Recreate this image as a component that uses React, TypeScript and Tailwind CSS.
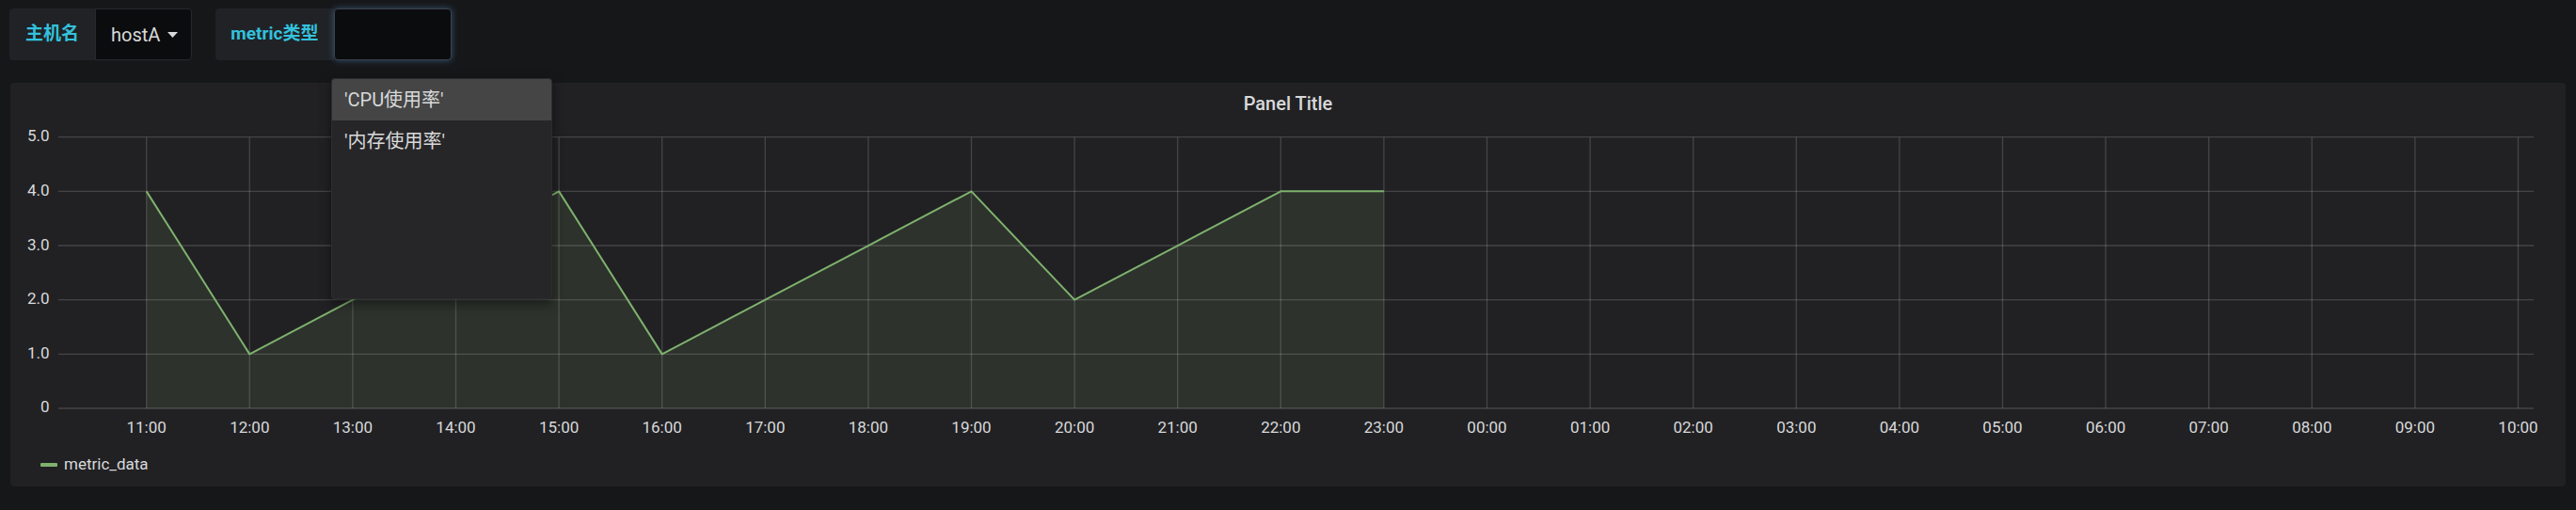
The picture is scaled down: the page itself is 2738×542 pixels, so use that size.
import React from "react";

const HOURS = [
  "11:00","12:00","13:00","14:00","15:00","16:00","17:00","18:00","19:00","20:00","21:00","22:00",
  "23:00","00:00","01:00","02:00","03:00","04:00","05:00","06:00","07:00","08:00","09:00","10:00",
];
const DATA = [4, 1, 2, 3, 4, 1, 2, 3, 4, 2, 3, 4, 4];

const X0 = 144.7;
const DX = 109.6;
const Y0 = 302;
const DY = 57.66;
const PLOT_L = 51;
const PLOT_R = 2682;

const xOf = (k: number) => X0 + k * DX;
const yOf = (v: number) => Y0 - v * DY;

function Chart() {
  const linePts = DATA.map((v, k) => `${xOf(k)},${yOf(v)}`).join(" ");
  const fillPts = `${xOf(0)},${Y0} ${linePts} ${xOf(DATA.length - 1)},${Y0}`;
  return (
    <svg width={2720} height={340} className="block" fontFamily="Roboto, sans-serif">
      <polygon points={fillPts} fill="#2d322c" />
      {[0, 1, 2, 3, 4, 5].map((v) => (
        <line key={v} x1={PLOT_L} x2={PLOT_R} y1={yOf(v)} y2={yOf(v)} stroke="rgba(255,255,255,0.16)" strokeWidth={1.3} />
      ))}
      {HOURS.map((_, k) => (
        <line key={k} x1={xOf(k)} x2={xOf(k)} y1={yOf(5)} y2={Y0} stroke="rgba(255,255,255,0.16)" strokeWidth={1.3} />
      ))}
      <polyline points={linePts} fill="none" stroke="#7eb26d" strokeWidth={2} strokeLinejoin="round" />
      {[0, 1, 2, 3, 4, 5].map((v) => (
        <text key={v} x={41.5} y={yOf(v)} textAnchor="end" dominantBaseline="middle" fontSize={17} fill="#d8d9da">
          {v === 0 ? "0" : v.toFixed(1)}
        </text>
      ))}
      {HOURS.map((h, k) => (
        <text key={h} x={xOf(k)} y={324} textAnchor="middle" dominantBaseline="middle" fontSize={17} fill="#d8d9da">
          {h}
        </text>
      ))}
    </svg>
  );
}

export default function App() {
  return (
    <div className="relative w-[2738px] h-[542px] overflow-hidden bg-[#161719] font-[Roboto,'Noto_Sans_CJK_SC',sans-serif] text-[#d8d9da]">
      {/* variable bar */}
      <div className="flex items-center pt-[9px] pl-[10px] gap-[25px]">
        <div className="flex h-[55px]">
          <div className="flex items-center px-[17px] bg-[#202226] rounded-l-[4px] text-[19px] font-bold text-[#33c1dc]">
            主机名
          </div>
          <div className="flex items-center pl-[16px] pr-[14px] gap-[8px] bg-[#0b0c0e] border border-[#27282b] rounded-r-[4px] text-[20px]">
            <span>hostA</span>
            <svg width="11" height="6" viewBox="0 0 11 6">
              <polygon points="0,0 11,0 5.5,6" fill="#d8d9da" />
            </svg>
          </div>
        </div>
        <div className="flex h-[55px]">
          <div className="flex items-center pl-[16px] pr-[17px] bg-[#202226] rounded-l-[4px] text-[19px] font-bold text-[#33c1dc]">
            metric类型
          </div>
          <div className="w-[125px] bg-[#0b0c0e] border border-[#3a414b] rounded-[4px] shadow-[0_0_7px_rgba(90,160,225,0.45)]" />
        </div>
      </div>

      {/* panel */}
      <div className="mx-[11px] mt-[24px] h-[429px] bg-[#212124] rounded-[4px] flex flex-col">
        <div className="h-[44px] flex items-center justify-center text-[20px] font-medium text-[#d8d9da]">
          Panel Title
        </div>
        <Chart />
        <div className="h-[44px] flex items-center pl-[32px] gap-[7px]">
          <div className="w-[18px] h-[4px] rounded-[1px] bg-[#7eb26d]" />
          <span className="text-[17px] text-[#d8d9da]">metric_data</span>
        </div>
      </div>

      {/* dropdown menu */}
      <div className="absolute left-[352px] top-[83px] w-[235px] h-[235px] bg-[#262628] border border-[#2c2c2f] rounded-[3px] shadow-[0_4px_12px_rgba(0,0,0,0.5)] text-[20px] text-[#d8d9da]">
        <div className="h-[44px] flex items-center pl-[13px] bg-[#454545] rounded-t-[3px]">'CPU使用率'</div>
        <div className="h-[44px] flex items-center pl-[13px]">'内存使用率'</div>
      </div>
    </div>
  );
}
